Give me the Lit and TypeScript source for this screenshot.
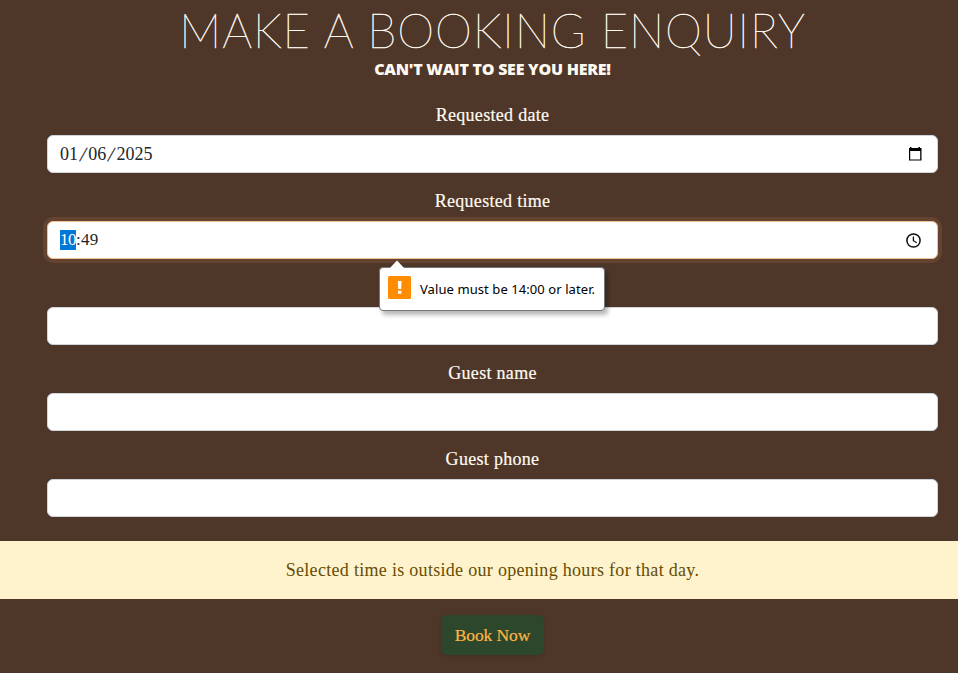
import { LitElement, html, css, svg, nothing } from "lit";
import { customElement, property } from "lit/decorators.js";

@customElement("form-field")
class FormField extends LitElement {
  @property() label = "";
  @property() kind = "text";
  @property({ type: Boolean, reflect: true }) active = false;

  static styles = css`
    :host { display: block; position: relative; margin-bottom: 16px; }
    .label { display: block; height: 24px; line-height: 24px; margin-bottom: 8px; text-align: center; color: #fffaf0; white-space: nowrap; -webkit-text-stroke: 0.2px #fffaf0; }
    .box {
      box-sizing: border-box; height: 38px; padding: 0 12px; border: 1px solid #ced4da; border-radius: 6px;
      background: #fff; color: #212529; display: flex; align-items: center; justify-content: space-between;
      line-height: 24px;
    }
    :host([active]) .box { border-color: #efc28f; box-shadow: 0 0 0 4px #644430; }
    .value { white-space: pre; letter-spacing: 0; }
    .date { font-size: 18px; }
    .time { font-size: 17px; letter-spacing: 0.3px; }
    .slash { display: inline-block; margin: 0 2.6px; transform: skewX(-14deg) scaleY(1.1); -webkit-text-stroke: 0.3px #212529; }
    .selected { display: inline-block; height: 20px; line-height: 20px; background: #0078d7; color: #fff; letter-spacing: -0.5px; }
    svg { display: block; }
    .calendar { margin-right: 2px; }
    .clock { margin-right: 3px; }
  `;

  private content() {
    if (this.kind === "date") {
      return html`<span class="value date">01<span class="slash">/</span>06<span class="slash">/</span>2025</span>
        <svg class="calendar" width="16" height="16" viewBox="0 0 16 16">${svg`<path fill="#000" fill-rule="evenodd" d="M3 1h1.500v1h7V1H13v1h1.500v12.500H2V2h1zM3.200 5v8.400h10V5z"/>`}</svg>`;
    }
    if (this.kind === "time") {
      return html`<span class="value time"><span class="selected">10</span>:49</span>
        <svg class="clock" width="16" height="16" viewBox="0 0 16 16" fill="none" stroke="#111">${svg`<circle cx="7.500" cy="8.500" r="6.600" stroke-width="1.500"/><path stroke-width="1.300" d="M7.400 4.500v4.200l3.300 2"/>`}</svg>`;
    }
    return nothing;
  }

  render() {
    return html`<span class="label">${this.label}</span>
      <div class="box">${this.content()}</div>
      <slot></slot>`;
  }
}

@customElement("app-root")
class AppRoot extends LitElement {
  static styles = css`
    :host { display: block; height: 673px; overflow: hidden; background: #4e3629; font: 18px/24px "Liberation Serif", serif; letter-spacing: 0.3px; }
    .page { width: 985px; }
    h1 { margin: 0; padding-top: 3px; box-sizing: border-box; height: 58px; text-align: center; font: 100 47px/54px Lato, sans-serif; letter-spacing: 0.9px; color: #fffaf0; -webkit-text-stroke: 0.5px #fffaf0; white-space: nowrap; }
    h2 { margin: 0 0 23px; height: 22px; text-align: center; font: 800 16px/23px "Open Sans", sans-serif; letter-spacing: -0.25px; color: #fffaf0; white-space: nowrap; }
    form { padding: 0 47px; margin-bottom: 24px; }
    form > :last-child { margin-bottom: 0; }
    .alert { height: 58px; line-height: 58px; text-align: center; background: #fff3cd; color: #664d03; white-space: nowrap; }
    .actions { display: flex; justify-content: center; padding-top: 16px; }
    button { width: 103px; height: 40px; padding: 0; border: 0; border-radius: 6px; background: #2d472c; color: #ffb443; font: inherit; font-size: 17.500px; letter-spacing: -0.1px; -webkit-text-stroke: 0.2px #ffb443; box-shadow: 0 2px 4px rgba(0, 0, 0, 0.12); }
    .tip {
      position: absolute; z-index: 2; left: 332px; top: 78px; box-sizing: border-box; width: 226px; height: 44px; padding: 0 8px;
      display: flex; align-items: center; gap: 9px; background: #fff; border: 1px solid #767676; border-radius: 4px;
      box-shadow: 3px 4px 4px rgba(0, 0, 0, 0.28); font: 13px/18px "Noto Sans", sans-serif; letter-spacing: 0.08px; color: #000; white-space: nowrap;
    }
    .arrow { position: absolute; left: 8px; top: -8px; }
    .warn { margin-top: -3px; flex: none; }
  `;

  render() {
    return html`<main class="page">
      <h1>MAKE A BOOKING ENQUIRY</h1>
      <h2>CAN'T WAIT TO SEE YOU HERE!</h2>
      <form>
        <form-field label="Requested date" kind="date"></form-field>
        <form-field label="Requested time" kind="time" active>
          <div class="tip" role="alert">
            <svg class="arrow" width="18" height="9" viewBox="0 0 18 9"><path d="M1 9L9 0.500L17 9Z" fill="#fff"/></svg>
            <svg class="warn" width="23" height="23" viewBox="0 0 23 23"><rect width="23" height="23" rx="1.500" fill="#ff8c00"/><path d="M9.800 5h3.800l-.4 8h-3zM10 14.700h3.400v3.100H10z" fill="#fff"/></svg>
            <span>Value must be 14:00 or later.</span>
          </div>
        </form-field>
        <form-field></form-field>
        <form-field label="Guest name"></form-field>
        <form-field label="Guest phone"></form-field>
      </form>
      <div class="alert">Selected time is outside our opening hours for that day.</div>
      <div class="actions"><button type="button">Book Now</button></div>
    </main>`;
  }
}
